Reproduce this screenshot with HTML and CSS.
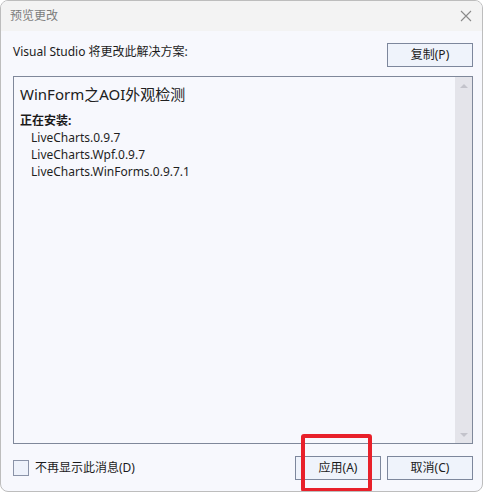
FILE: index.html
```html
<!DOCTYPE html>
<html lang="zh-CN">
<head>
<meta charset="utf-8">
<title>预览更改</title>
<link rel="stylesheet" href="styles.css">
</head>
<body>
<div class="window">
  <div class="titlebar">
    <span class="title">预览更改</span>
    <svg class="close" width="12" height="12" viewBox="0 0 12 12"><path d="M1 1 L11 11 M11 1 L1 11" stroke="#8a8a8a" stroke-width="1.1" fill="none"/></svg>
  </div>
  <div class="content">
    <div class="toprow">
      <span class="label">Visual Studio 将更改此解决方案:</span>
      <button class="btn">复制(P)</button>
    </div>
    <div class="textbox">
      <div class="text">
        <div class="heading">WinForm之AOI外观检测</div>
        <div class="section">正在安装:</div>
        <div class="item">LiveCharts.0.9.7</div>
        <div class="item">LiveCharts.Wpf.0.9.7</div>
        <div class="item">LiveCharts.WinForms.0.9.7.1</div>
      </div>
      <div class="scrollbar">
        <span class="arrow up"></span>
        <span class="arrow down"></span>
      </div>
    </div>
    <div class="bottomrow">
      <label class="check"><span class="box"></span>不再显示此消息(D)</label>
      <div class="buttons">
        <button class="btn">应用(A)</button>
        <button class="btn">取消(C)</button>
      </div>
    </div>
  </div>
  <div class="highlight"></div>
</div>
</body>
</html>
```
FILE: styles.css
```css
* { box-sizing: border-box; }
html, body { margin: 0; padding: 0; background: #ffffff; }
body {
  font-family: "Noto Sans", "Noto Sans CJK SC", sans-serif;
  font-size: 12px;
  color: #1b1b1b;
}
.window {
  position: relative;
  width: 483px;
  height: 492px;
  border: 1px solid #bdbdbd;
  border-radius: 8px;
  background: #f7f8fd;
  overflow: hidden;
  display: flex;
  flex-direction: column;
}
.titlebar {
  height: 30px;
  background: #f3f3f3;
  display: flex;
  align-items: center;
  justify-content: space-between;
  padding: 0 8px 0 9px;
}
.title {
  color: #7d7d7d;
  font-size: 12px;
  line-height: 14px;
}
.close { display: block; margin-right: 2px; }
.content {
  flex: 1;
  padding: 12px 9px 0 12px;
  display: flex;
  flex-direction: column;
}
.toprow {
  display: flex;
  justify-content: space-between;
  align-items: center;
  height: 24px;
}
.label { line-height: 16px; margin-top: -6px; }
.btn {
  width: 86px;
  height: 24px;
  border: 1px solid #7d879c;
  background: #eff3fb;
  font-family: "Noto Sans", "Noto Sans CJK SC", sans-serif;
  font-size: 12px;
  color: #1b1b1b;
  padding: 0;
  line-height: 20px;
  border-radius: 0;
}
.textbox {
  margin-top: 9px;
  height: 368px;
  width: 460px;
  border: 1px solid #7f889a;
  display: flex;
  background: #f7f8fd;
}
.text {
  flex: 1;
  padding: 7px 0 0 6px;
}
.heading {
  font-size: 15px;
  line-height: 20px;
  color: #202020;
  margin-bottom: 8px;
}
.section {
  font-weight: bold;
  line-height: 17px;
  color: #1b1b1b;
}
.item {
  padding-left: 11px;
  line-height: 17px;
  color: #1f1f1f;
}
.scrollbar {
  width: 17px;
  background: #e4e4ea;
  display: flex;
  flex-direction: column;
  justify-content: space-between;
  align-items: center;
  padding: 7px 0 6px;
}
.arrow {
  width: 0;
  height: 0;
  border-left: 4px solid transparent;
  border-right: 4px solid transparent;
}
.arrow.up { border-bottom: 4px solid #c3c3cb; }
.arrow.down { border-top: 4px solid #c3c3cb; }
.bottomrow {
  margin-top: 12px;
  display: flex;
  justify-content: space-between;
  align-items: center;
  height: 24px;
  width: 460px;
}
.check {
  display: flex;
  align-items: center;
  gap: 6px;
  line-height: 16px;
}
.box {
  width: 16px;
  height: 16px;
  border: 1px solid #8a93a8;
  background: #eef2fb;
}
.buttons {
  display: flex;
  gap: 6px;
}
.highlight {
  position: absolute;
  left: 300px;
  top: 433px;
  width: 71px;
  height: 58px;
  border: 4px solid #e8202a;
  border-radius: 3px;
}
```
